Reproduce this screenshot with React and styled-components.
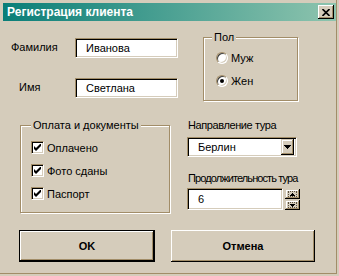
import React from 'react';
import styled, { createGlobalStyle } from 'styled-components';

const FACE = '#D5CCBB';
const SHADOW = '#A28D68';
const DARK = '#000000';
const LIGHT = '#FFFFFF';

const GlobalStyle = createGlobalStyle`
  html, body {
    margin: 0;
    padding: 0;
    background: ${FACE};
  }
  body {
    font-family: "Liberation Sans", Arial, sans-serif;
    font-size: 11px;
    color: #000;
  }
`;

const Window = styled.div`
  width: 337px;
  height: 274px;
  box-sizing: border-box;
  padding: 3px 0 0 3px;
  border-right: 1px solid ${SHADOW};
  border-bottom: 1px solid ${SHADOW};
  display: flex;
  flex-direction: column;
`;

const TitleBar = styled.div`
  height: 18px;
  flex: none;
  display: flex;
  align-items: center;
  justify-content: space-between;
  padding: 0 2px 0 4px;
  background: linear-gradient(to right, #0A7E78, #8EC4AE);
`;

const TitleText = styled.span`
  color: #fff;
  font-weight: bold;
  font-size: 12px;
  line-height: 14px;
`;

const CloseButton = styled.div`
  width: 16px;
  height: 14px;
  box-sizing: border-box;
  background: ${FACE};
  display: flex;
  align-items: center;
  justify-content: center;
  box-shadow: inset -1px -1px 0 ${DARK}, inset 1px 1px 0 ${LIGHT},
    inset -2px -2px 0 ${SHADOW};
`;

const Body = styled.div`
  display: flex;
  flex-direction: column;
`;

const Row = styled.div`
  display: flex;
  align-items: flex-start;
  margin-top: ${(p) => p.$top}px;
`;

const Fields = styled.div`
  display: flex;
  flex-direction: column;
  gap: 20px;
  margin-top: 1px;
  width: 175px;
`;

const FieldRow = styled.div`
  display: flex;
  align-items: center;
  height: 20px;
`;

const FieldLabel = styled.span`
  width: ${(p) => 72 - p.$indent}px;
  padding-left: ${(p) => p.$indent}px;
  margin-top: -3px;
`;

const Sunken = styled.div`
  box-sizing: border-box;
  background: #fff;
  border: 1px solid;
  border-color: ${SHADOW} ${LIGHT} ${LIGHT} ${SHADOW};
  box-shadow: inset 1px 1px 0 ${DARK}, inset -1px -1px 0 ${FACE};
`;

const TextBox = styled(Sunken)`
  width: ${(p) => p.$w}px;
  height: ${(p) => p.$h || 20}px;
  display: flex;
  align-items: center;
  padding-left: ${(p) => p.$pad || 10}px;
`;

const Frame = styled.div`
  position: relative;
  box-sizing: border-box;
  width: ${(p) => p.$w}px;
  height: ${(p) => p.$h}px;
  margin-left: ${(p) => p.$left}px;
  margin-top: ${(p) => p.$top || 0}px;
  border: 1px solid ${SHADOW};
  box-shadow: inset 1px 1px 0 ${LIGHT}, 1px 1px 0 ${LIGHT};
  padding: ${(p) => p.$pad};
  display: flex;
  flex-direction: column;
  gap: ${(p) => p.$gap}px;
`;

const Legend = styled.span`
  position: absolute;
  top: -7px;
  left: ${(p) => p.$left}px;
  padding: 0 2px;
  line-height: 13px;
  background: ${FACE};
`;

const OptionRow = styled.label`
  display: flex;
  align-items: center;
  gap: 3px;
  height: ${(p) => p.$h}px;
`;

const Radio = styled.span`
  position: relative;
  width: 12px;
  height: 12px;
  box-sizing: border-box;
  border-radius: 50%;
  background: #fff;
  border: 1px solid;
  border-color: ${SHADOW} ${LIGHT} ${LIGHT} ${SHADOW};
  box-shadow: inset 1px 1px 0 #404040, inset -1px -1px 0 ${FACE};
  &::after {
    content: '';
    display: ${(p) => (p.$checked ? 'block' : 'none')};
    position: absolute;
    left: 3px;
    top: 3px;
    width: 4px;
    height: 4px;
    border-radius: 50%;
    background: #000;
  }
`;

const CheckBox = styled(Sunken)`
  width: 13px;
  height: 13px;
  display: flex;
  align-items: center;
  justify-content: center;
`;

const Column = styled.div`
  display: flex;
  flex-direction: column;
  margin-left: 17px;
`;

const Caption = styled.span`
  line-height: 13px;
  padding-left: 1px;
  white-space: nowrap;
  letter-spacing: ${(p) => p.$spacing || 0}px;
  margin-top: ${(p) => p.$top || 0}px;
`;

const Combo = styled(TextBox)`
  margin-top: 5px;
  justify-content: space-between;
  padding-right: 2px;
`;

const Raised = styled.div`
  box-sizing: border-box;
  background: ${FACE};
  display: flex;
  align-items: center;
  justify-content: center;
  box-shadow: inset -1px -1px 0 ${DARK}, inset 1px 1px 0 ${FACE},
    inset -2px -2px 0 ${SHADOW}, inset 2px 2px 0 ${LIGHT};
`;

const DropButton = styled(Raised)`
  width: 13px;
  height: 16px;
`;

const Spinner = styled.div`
  display: flex;
  align-items: flex-start;
  margin-top: 3px;
`;

const SpinButtons = styled.div`
  display: flex;
  flex-direction: column;
  gap: 1px;
  margin-left: 2px;
  margin-top: 1px;
`;

const SpinButton = styled(Raised)`
  width: 15px;
  height: 10px;
`;

const Dotted = styled.span`
  display: flex;
  align-items: center;
  justify-content: center;
  width: 9px;
  height: 6px;
  box-sizing: border-box;
  border: 1px dotted #5a5040;
`;

const Buttons = styled.div`
  display: flex;
  gap: 16px;
  margin-top: 17px;
  margin-left: 16px;
`;

const Button = styled.button`
  width: ${(p) => p.$w}px;
  height: 32px;
  box-sizing: border-box;
  background: ${FACE};
  font-family: inherit;
  font-size: 11px;
  font-weight: bold;
  color: #000;
  padding: 0;
  border: ${(p) => (p.$default ? `1px solid ${DARK}` : 'none')};
  box-shadow: inset -1px -1px 0 ${DARK}, inset 1px 1px 0 ${LIGHT},
    inset -2px -2px 0 ${SHADOW};
`;

const Triangle = ({ w, h, up }) => (
  <svg width={w} height={h} viewBox={`0 0 ${w} ${h}`} shapeRendering="crispEdges">
    <polygon
      points={up ? `${w / 2},0 ${w},${h} 0,${h}` : `0,0 ${w},0 ${w / 2},${h}`}
      fill="#000"
    />
  </svg>
);

const Check = () => (
  <svg width="7" height="7" viewBox="0 0 7 7">
    <polygon points="0,2 2,4 7,-1 7,2 2,7 0,5" fill="#000" />
  </svg>
);

const CloseGlyph = () => (
  <svg width="8" height="7" viewBox="0 0 8 7">
    <path d="M0.5 0 L7.5 7 M7.5 0 L0.5 7" stroke="#000" strokeWidth="1.6" />
  </svg>
);

export default function App() {
  return (
    <>
      <GlobalStyle />
      <Window>
        <TitleBar>
          <TitleText>Регистрация клиента</TitleText>
          <CloseButton>
            <CloseGlyph />
          </CloseButton>
        </TitleBar>
        <Body>
          <Row $top={16}>
            <Fields>
              <FieldRow>
                <FieldLabel $indent={8}>Фамилия</FieldLabel>
                <TextBox $w={103}>Иванова</TextBox>
              </FieldRow>
              <FieldRow>
                <FieldLabel $indent={16}>Имя</FieldLabel>
                <TextBox $w={103}>Светлана</TextBox>
              </FieldRow>
            </Fields>
            <Frame $w={95} $h={64} $left={25} $pad="14px 0 0 12px" $gap={11}>
              <Legend $left={8}>Пол</Legend>
              <OptionRow $h={12}>
                <Radio />
                Муж
              </OptionRow>
              <OptionRow $h={12}>
                <Radio $checked />
                Жен
              </OptionRow>
            </Frame>
          </Row>
          <Row $top={18}>
            <Frame $w={150} $h={88} $left={17} $top={6} $pad="15px 0 0 10px" $gap={10}>
              <Legend $left={10}>Оплата и документы</Legend>
              <OptionRow $h={13}>
                <CheckBox>
                  <Check />
                </CheckBox>
                Оплачено
              </OptionRow>
              <OptionRow $h={13}>
                <CheckBox>
                  <Check />
                </CheckBox>
                Фото сданы
              </OptionRow>
              <OptionRow $h={13}>
                <CheckBox>
                  <Check />
                </CheckBox>
                Паспорт
              </OptionRow>
            </Frame>
            <Column>
              <Caption $spacing={-0.4}>Направление тура</Caption>
              <Combo $w={110}>
                Берлин
                <DropButton>
                  <Triangle w={7} h={4} />
                </DropButton>
              </Combo>
              <Caption $top={15} $spacing={-0.9}>Продолжительность тура</Caption>
              <Spinner>
                <TextBox $w={96} $h={22}>6</TextBox>
                <SpinButtons>
                  <SpinButton>
                    <Dotted>
                      <Triangle w={5} h={3} up />
                    </Dotted>
                  </SpinButton>
                  <SpinButton>
                    <Dotted>
                      <Triangle w={5} h={3} />
                    </Dotted>
                  </SpinButton>
                </SpinButtons>
              </Spinner>
            </Column>
          </Row>
          <Buttons>
            <Button $w={136} $default>OK</Button>
            <Button $w={144}>Отмена</Button>
          </Buttons>
        </Body>
      </Window>
    </>
  );
}
